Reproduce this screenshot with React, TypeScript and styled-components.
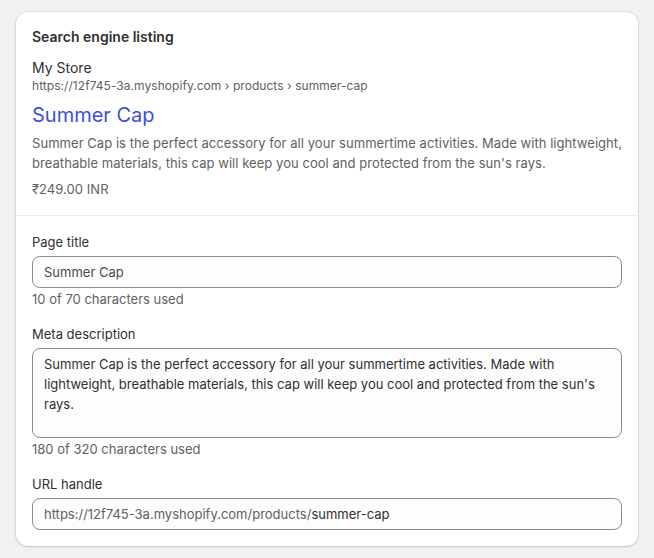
import styled, { createGlobalStyle } from "styled-components";

const GlobalStyle = createGlobalStyle`
  body {
    margin: 0;
    background: #f1f1f1;
    font-family: Inter, "Liberation Sans", sans-serif;
    color: #303030;
  }
`;

const Page = styled.div`
  padding: 12px 16px;
`;

const Card = styled.div`
  background: #ffffff;
  border-radius: 12px;
  box-shadow: 0 0 0 1px rgba(0, 0, 0, 0.06), 0 1px 2px rgba(0, 0, 0, 0.14);
  overflow: hidden;
`;

const Section = styled.div<{ $divided?: boolean }>`
  display: flex;
  flex-direction: column;
  padding: 16px;
  border-top: ${({ $divided }) => ($divided ? "1px solid #ebebeb" : "none")};
`;

const Heading = styled.h2`
  margin: -1px 0 11px;
  font-size: 14px;
  line-height: 20px;
  font-weight: 600;
`;

const StoreName = styled.div`
  font-size: 14px;
  line-height: 20px;
  color: #303030;
`;

const Crumbs = styled.div`
  font-size: 12px;
  line-height: 16px;
  color: #616161;
  letter-spacing: 0.05px;
`;

const PreviewTitle = styled.div`
  margin-top: 7px;
  font-size: 20px;
  line-height: 28px;
  color: #3d4fd8;
`;

const PreviewText = styled.p<{ $gap?: number }>`
  margin: ${({ $gap }) => $gap ?? 0}px 0 0;
  font-size: 13px;
  line-height: 20px;
  color: #616161;
  letter-spacing: 0.05px;
`;

const Fields = styled(Section)`
  gap: 15px;
`;

const Field = styled.div`
  display: flex;
  flex-direction: column;
`;

const Label = styled.label`
  margin-bottom: 4px;
  font-size: 13px;
  line-height: 20px;
  color: #303030;
`;

const InputBox = styled.div`
  display: flex;
  align-items: center;
  height: 32px;
  box-sizing: border-box;
  padding: 0 11px;
  border: 1px solid #8a8a8a;
  border-radius: 8px;
  background: #fdfdfd;
  font-size: 13px;
`;

const Prefix = styled.span`
  color: #616161;
`;

const Input = styled.input<{ $muted?: boolean }>`
  flex: 1;
  min-width: 0;
  padding: 0;
  border: none;
  outline: none;
  background: transparent;
  font: inherit;
  color: ${({ $muted }) => ($muted ? "#4a4a4a" : "#303030")};
`;

const TextArea = styled.textarea`
  height: 90px;
  box-sizing: border-box;
  padding: 5px 11px;
  border: 1px solid #8a8a8a;
  border-radius: 8px;
  background: #fdfdfd;
  font-family: inherit;
  font-size: 13px;
  line-height: 20px;
  color: #303030;
  resize: none;
  outline: none;
`;

const Help = styled.div`
  margin-top: 1px;
  font-size: 13px;
  line-height: 20px;
  color: #616161;
`;

const description =
  "Summer Cap is the perfect accessory for all your summertime activities. Made with lightweight, breathable materials, this cap will keep you cool and protected from the sun's rays.";

export default function App() {
  return (
    <>
      <GlobalStyle />
      <Page>
        <Card>
          <Section>
            <Heading>Search engine listing</Heading>
            <StoreName>My Store</StoreName>
            <Crumbs>https://12f745-3a.myshopify.com › products › summer-cap</Crumbs>
            <PreviewTitle>Summer Cap</PreviewTitle>
            <PreviewText $gap={4}>{description}</PreviewText>
            <PreviewText $gap={6}>₹249.00 INR</PreviewText>
          </Section>
          <Fields $divided>
            <Field>
              <Label>Page title</Label>
              <InputBox>
                <Input $muted defaultValue="Summer Cap" />
              </InputBox>
              <Help>10 of 70 characters used</Help>
            </Field>
            <Field>
              <Label>Meta description</Label>
              <TextArea defaultValue={description} />
              <Help>180 of 320 characters used</Help>
            </Field>
            <Field>
              <Label>URL handle</Label>
              <InputBox>
                <Prefix>https://12f745-3a.myshopify.com/products/</Prefix>
                <Input defaultValue="summer-cap" />
              </InputBox>
            </Field>
          </Fields>
        </Card>
      </Page>
    </>
  );
}
